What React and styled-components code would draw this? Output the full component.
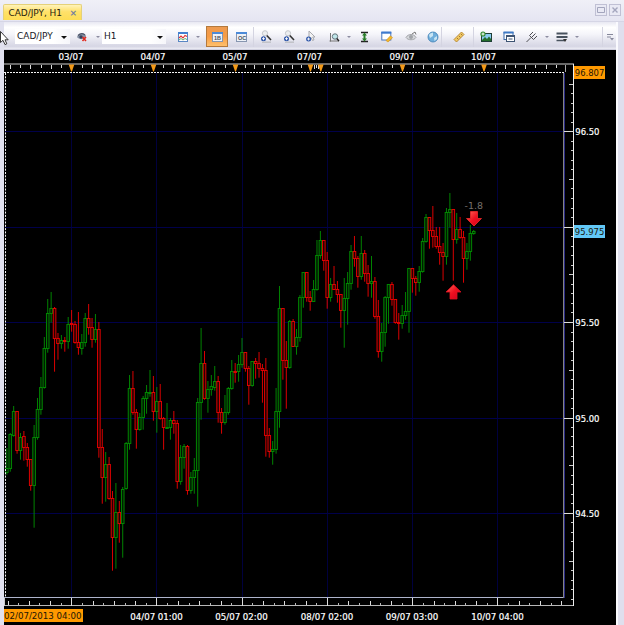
import styled, { createGlobalStyle } from "styled-components"

/* high, body top, body bottom, low, direction: one entry per hour */
const CANDLES = `448 468 472 474 u|433 434 468 471 u|406 411 435 436 u|411 411 450 453 d|433 437 450 459 u
431 436 447 460 d|443 447 459 466 d|459 459 485 490 d|425 437 485 527 u|398 409 437 439 u
377 387 409 414 u|337 348 387 388 u|299 313 348 352 u|292 308 313 322 u|307 308 338 371 d
333 338 343 359 d|335 340 343 348 u|337 340 341 351 d|317 324 341 348 u|310 323 324 331 d
321 324 342 343 d|312 342 347 354 d|334 342 348 354 u|313 318 342 346 u|304 318 327 334 d
318 327 339 347 d|314 329 339 342 u|322 329 447 457 d|429 447 477 503 d|452 464 477 501 u
457 464 498 499 d|491 498 537 570 d|483 512 537 568 u|501 512 523 542 d|487 489 523 557 u
442 443 488 489 u|375 388 443 449 u|371 388 412 414 d|409 412 429 448 d|413 417 429 430 u
396 398 417 429 u|385 392 398 413 u|370 392 393 396 u|376 392 411 420 d|387 401 411 432 u
384 401 418 419 d|417 418 427 449 d|403 427 428 428 u|418 420 427 439 u|411 420 423 433 d
420 423 481 488 d|445 457 481 484 u|444 446 457 468 u|445 446 490 494 d|472 477 490 493 u
458 470 477 493 u|398 402 470 506 u|328 363 402 419 u|351 363 398 399 d|381 389 398 412 u
375 386 389 395 u|366 381 387 390 u|376 381 412 422 d|408 412 422 433 d|395 412 422 424 u
387 388 412 414 u|360 371 388 389 u|363 371 372 382 d|355 364 371 381 u|338 352 364 367 u
352 352 368 371 d|366 368 385 404 d|361 361 385 386 u|358 361 363 378 d|352 363 368 377 d
364 368 370 402 d|358 370 435 456 d|428 435 451 457 d|441 449 451 464 u|388 411 449 453 u
286 308 411 427 u|308 308 360 379 d|341 360 367 408 d|320 321 367 368 u|319 321 346 346 d
329 337 346 354 u|295 297 337 341 u|272 272 297 307 u|272 272 297 301 d|291 297 301 310 d
280 289 301 301 u|240 255 289 290 u|231 240 255 258 u|240 240 260 270 d|252 260 297 308 d
278 284 297 301 u|266 284 289 289 d|281 289 294 302 d|294 294 310 327 d|278 298 310 347 u
272 283 298 324 u|245 251 283 289 u|236 251 258 266 d|256 258 276 287 d|236 253 276 279 u
250 253 273 281 d|265 273 283 296 d|256 281 283 297 u|277 281 316 318 d|300 316 351 357 d
323 332 351 361 u|296 297 332 346 u|284 284 297 323 u|282 284 299 305 d|299 299 322 323 d
313 322 323 339 d|305 315 323 328 u|292 311 315 319 u|268 268 311 332 u|268 268 278 292 d
276 278 282 295 d|266 271 282 291 u|238 241 271 272 u|214 217 241 242 u|217 217 230 248 d
206 230 236 247 d|227 236 246 248 d|227 246 252 264 d|243 252 256 280 d|208 212 256 264 u
193 209 212 227 u|209 209 239 280 d|213 229 239 243 u|217 229 237 238 d|231 237 258 282 d
243 251 258 269 u|225 233 251 260 u|230 231 233 234 u`
  .split(/[|\n]/)
  .map((row) => {
    const [high, top, bottom, low, dir] = row.trim().split(" ")
    return { high: +high, top: +top, bottom: +bottom, low: +low, up: dir === "u" }
  })

const CANDLE_START = 6.85
const CANDLE_STEP = 3.408

const GRID_X = [71, 156, 242, 327, 412, 497]
const GRID_Y = [131, 227, 322, 418, 513]

const TOP_LABELS = [
  [71, "03/07"],
  [153, "04/07"],
  [235, "05/07"],
  [309.5, "07/07"],
  [402, "09/07"],
  [483.5, "10/07"],
]
const MARKERS = [71.5, 153.5, 235.5, 310.5, 320.8, 402.5, 484]
const TOP_TICKS = [
  ...Array.from({ length: 23 }, (_, i) => 10 + i * 10.22),
  ...Array.from({ length: 7 }, (_, i) => 244.8 + i * 9.35),
  313.5,
  315.5,
  317.5,
  ...Array.from({ length: 23 }, (_, i) => 331 + i * 10.22),
]
const BOTTOM_LABELS = [
  [156.5, "04/07 01:00"],
  [241.5, "05/07 02:00"],
  [327, "08/07 02:00"],
  [412, "09/07 03:00"],
  [497.5, "10/07 04:00"],
]
const PRICE_LABELS = [
  [131, "96.50"],
  [322, "95.50"],
  [418, "95.00"],
  [513, "94.50"],
]
const BOTTOM_TICKS = Array.from({ length: 53 }, (_, i) => ({ x: 7.5 + i * 10.65, i }))
const PRICE_TICKS = Array.from({ length: 55 }, (_, i) => ({ y: 83.8 + i * 9.54, i }))

const App = () => (
  <>
    <GlobalStyle />
    <Window>
      <TitleBar>
        <Tab>
          CAD/JPY, H1 <TabClose>×</TabClose>
        </Tab>
        <WindowButtons>
          <WindowButton>
            <svg width="8" height="8">
              <path d="M0.5 1.5H7.5V6.5H0.5Z" fill="none" stroke="#a3a5bd" />
            </svg>
          </WindowButton>
          <WindowButton>
            <svg width="8" height="8">
              <path d="M1.5 1.5L6.5 6.5M6.5 1.5L1.5 6.5" stroke="#a3a5bd" strokeWidth="1.4" />
            </svg>
          </WindowButton>
        </WindowButtons>
      </TitleBar>
      <Toolbar />
      <Chart />
    </Window>
    <Pointer width="9" height="15" viewBox="0 0 9 15">
      <path
        d="M0.5 0.5V11.5L3 9.3L5 13.6L6.8 12.8L5 8.8H8.2Z"
        fill="#fff"
        stroke="#222"
        strokeWidth="0.9"
      />
    </Pointer>
  </>
)

export default App

const Toolbar = () => (
  <Bar>
    <Grip />
    <Combo $width={55}>
      CAD/JPY <Caret />
    </Combo>
    <Tool $width={24}>
      <EyeIcon />
    </Tool>
    <Drop $width={8} />
    <Combo $width={64}>
      H1 <Caret />
    </Combo>
    <Tool $width={24} $gap={5}>
      <ChartIcon />
    </Tool>
    <Drop $width={6} />
    <Tool $width={22} $gap={5} $active>
      <PanelIcon label="1B" />
    </Tool>
    <Tool $width={24} $gap={1}>
      <PanelIcon label="OC" />
    </Tool>
    <Divider />
    <Tool $width={24}>
      <LensIcon />
    </Tool>
    <Tool $width={22}>
      <LensIcon />
    </Tool>
    <Tool $width={22}>
      <CursorPlusIcon />
    </Tool>
    <Tool $width={23}>
      <ZoomRangeIcon />
    </Tool>
    <Drop $width={8} />
    <Tool $width={24}>
      <HeightIcon />
    </Tool>
    <Tool $width={20}>
      <NoteIcon />
    </Tool>
    <Tool $width={27}>
      <GreyGlobeIcon />
    </Tool>
    <Tool $width={17}>
      <GlobeIcon />
    </Tool>
    <Divider />
    <Tool $width={24} $gap={5}>
      <RulerIcon />
    </Tool>
    <Divider $gap={2} />
    <Tool $width={24}>
      <PictureIcon />
    </Tool>
    <Tool $width={21}>
      <WindowsIcon />
    </Tool>
    <Tool $width={25}>
      <ForkIcon />
    </Tool>
    <Drop $width={5} />
    <Tool $width={25}>
      <LinesIcon />
    </Tool>
    <Drop $width={5} />
    <Spacer />
    <Divider />
    <Tool $width={13}>
      <OverflowIcon />
    </Tool>
  </Bar>
)

const Chart = () => (
  <ChartSvg width="612" height="575" viewBox="4 50 612 575">
    <rect x="4" y="50" width="612" height="575" fill="#000" />
    <g shapeRendering="crispEdges">
      {GRID_X.map((x) => (
        <rect key={x} x={x} y="73" width="1" height="524" fill="#00003e" />
      ))}
      {GRID_Y.map((y) => (
        <rect key={y} x="5" y={y} width="559" height="1" fill="#00004a" />
      ))}
    </g>
    {CANDLES.map((candle, i) => (
      <Candle key={i} x={CANDLE_START + i * CANDLE_STEP} {...candle} />
    ))}
    <TopScale />
    <BottomScale />
    <PriceScale />
    <Signals />
  </ChartSvg>
)

const Candle = ({ x, high, top, bottom, low, up }) => {
  const color = up ? "#008a00" : "#e60000"
  return (
    <g stroke={color} fill={up ? "#001c00" : "#260000"} strokeWidth="0.95">
      <path d={`M${x} ${high}V${low + 0.7}`} />
      <rect x={x - 1.3} y={top + 0.5} width="2.6" height={Math.max(bottom - top, 0.8)} />
    </g>
  )
}

const TopScale = () => (
  <g>
    <g shapeRendering="crispEdges">
      <rect x="4" y="63" width="570" height="2" fill="#686868" />
      {TOP_TICKS.map((x, i) => (
        <rect key={x} x={x} y="65" width="1" height={i % 2 ? 3 : 4} fill="#ddd" />
      ))}
      <rect x="565" y="65" width="1" height="7" fill="#aaa" />
    </g>
    <path d="M4 72.5H564" stroke="#f4f4f4" strokeDasharray="2 1" />
    <path d="M5.5 73V597" stroke="#f4f4f4" strokeDasharray="2 1.3" />
    {MARKERS.map((x) => (
      <path key={x} d={`M${x - 2.8} 64.5H${x + 2.8}L${x + 0.4} 71.5H${x - 0.4}Z`} fill="#f49a18" />
    ))}
    {TOP_LABELS.map(([x, label]) => (
      <ScaleText key={label} x={x} y="60" textAnchor="middle" textLength="25">
        {label}
      </ScaleText>
    ))}
  </g>
)

const BottomScale = () => (
  <g>
    <g shapeRendering="crispEdges">
      <rect x="4" y="597" width="560" height="1" fill="#aeb4cc" />
      <rect x="4" y="605" width="570" height="1" fill="#b8b8b8" />
      <rect x="4" y="598" width="1" height="8" fill="#ccc" />
      {BOTTOM_TICKS.map(({ x, i }) =>
        /* every eighth tick is drawn full height with the grid */
        i % 8 === 6 ? null : (
          <rect
            key={i}
            x={x}
            y={i % 2 ? 603 : 601}
            width="1"
            height={i % 2 ? 2 : 4}
            fill={i % 2 ? "#bbb" : "#ddd"}
          />
        )
      )}
      {GRID_X.map((x) => (
        <rect key={x} x={x} y="598" width="1" height="8" fill="#ddd" />
      ))}
    </g>
    {BOTTOM_LABELS.map(([x, label]) => (
      <ScaleText key={label} x={x} y="620" textAnchor="middle" textLength="52.5">
        {label}
      </ScaleText>
    ))}
    <rect x="4" y="609" width="79" height="13" fill="#ff9900" />
    <ScaleText x="4" y="619.2" textLength="77.5" $dark>
      02/07/2013 04:00
    </ScaleText>
  </g>
)

const PriceScale = () => (
  <g>
    <g shapeRendering="crispEdges">
      <rect x="563" y="73" width="1" height="525" fill="#858585" />
      <rect x="564" y="73" width="1" height="525" fill="#292985" />
      <rect x="573" y="64" width="1" height="542" fill="#eee" />
      {PRICE_TICKS.map(({ y, i }) =>
        i % 10 === 5 ? null : (
          <rect
            key={i}
            x={i % 5 ? 571 : 569}
            y={y - 0.3}
            width={i % 5 ? 2 : 4}
            height="1"
            fill="#ccc"
          />
        )
      )}
      {GRID_Y.map((y) => (
        <rect key={y} x="564" y={y} width="10" height="1" fill="#ddd" />
      ))}
    </g>
    {PRICE_LABELS.map(([y, label]) => (
      <ScaleText key={label} x="575.3" y={y + 4.2} textLength="24.2">
        {label}
      </ScaleText>
    ))}
    <rect x="574" y="66" width="31" height="13" fill="#ff9900" />
    <ScaleText x="574.8" y="76.2" textLength="29.5" $dark>
      96.807
    </ScaleText>
    <rect x="574" y="225" width="31" height="13" fill="#62c8f7" />
    <ScaleText x="574.8" y="235.2" textLength="29.5" $dark>
      95.975
    </ScaleText>
  </g>
)

const Signals = () => (
  <g>
    <defs>
      <linearGradient id="signal" x1="0" x2="1" y1="0" y2="1">
        <stop offset="0" stopColor="#ff6b5a" />
        <stop offset="0.5" stopColor="#ee1020" />
        <stop offset="1" stopColor="#c8001c" />
      </linearGradient>
    </defs>
    <ScaleText x="464.5" y="209" textLength="18.5" $muted>
      -1.8
    </ScaleText>
    <path
      d="M470.5 211.5H477.5V218.5H481.5L474 226L466.5 218.5H470.5Z"
      fill="url(#signal)"
      stroke="#f02a2a"
      strokeWidth="0.8"
    />
    <path
      d="M450 299V292H446L453.5 284.7L461 292H457V299Z"
      fill="url(#signal)"
      stroke="#e01020"
      strokeWidth="0.8"
    />
  </g>
)

/* Toolbar icons */
const EyeIcon = () => (
  <Icon>
    <path d="M2 7C3 3 10 2 11 6C10 10 4 10 2 7Z" fill="#8792a5" />
    <path d="M3 5.5C5 3.5 8 3.5 10 5" fill="none" stroke="#4c5468" strokeWidth="1.2" />
    <circle cx="6" cy="7" r="1.7" fill="#33415c" />
    <path d="M7.5 7L11 11M11 7L7.5 11" stroke="#e0281e" strokeWidth="1.5" />
  </Icon>
)

const ChartIcon = () => (
  <Icon>
    <rect x="2.5" y="2.5" width="9" height="9" fill="#fff" stroke="#5a86c4" />
    <rect x="2" y="2" width="10" height="2" fill="#4380d0" />
    <path d="M3 8L5 6L7 8L9 5.5L11 6.5" fill="none" stroke="#d33" strokeWidth="1.1" />
    <path d="M3 10L5 8.5L7 10L9 8.5L11 9.5" fill="none" stroke="#3a9a4a" strokeWidth="0.8" />
  </Icon>
)

const PanelIcon = ({ label }) => (
  <Icon>
    <rect x="2.5" y="2.5" width="10" height="9" fill="#eef2f8" stroke="#8796b0" />
    <rect x="2" y="2" width="11" height="2" fill="#4c8ad8" />
    <PanelText x="4" y="10.2">
      {label}
    </PanelText>
  </Icon>
)

const LensIcon = () => (
  <Icon>
    <circle cx="6" cy="3.3" r="2.6" fill="#eceef0" stroke="#c3c6cb" />
    <path d="M7.8 5.5L12 10" stroke="#333" strokeWidth="1.6" />
    <circle cx="4.5" cy="8.7" r="2.5" fill="#2b54a8" />
    <path d="M3 8.7H6M4.5 7.2V10.2" stroke="#fff" strokeWidth="0.9" />
    <path d="M3 12.2H12" stroke="#c0c1c8" strokeWidth="1.5" />
  </Icon>
)

const CursorPlusIcon = () => (
  <Icon>
    <path d="M5 1V9L7 7.5L8.5 10.5L10 9.8L8.7 7H11Z" fill="#f2f2f3" stroke="#a8a9ae" />
    <circle cx="4.6" cy="9" r="2.5" fill="#2b54a8" />
    <path d="M3.1 9H6.1M4.6 7.5V10.5" stroke="#fff" strokeWidth="0.9" />
  </Icon>
)

const ZoomRangeIcon = () => (
  <Icon>
    <path d="M3.5 3V11.5M2.5 11H12" stroke="#777" />
    <circle cx="8" cy="6.5" r="2.7" fill="#bfe6ea" stroke="#66757c" />
    <path d="M9.8 8.5L12 11" stroke="#222" strokeWidth="1.4" />
  </Icon>
)

const HeightIcon = () => (
  <Icon>
    <path d="M3 2.5H10M3 11.5H10" stroke="#222" strokeWidth="1.4" />
    <path d="M6.5 2.5L9 5.5H7.5V8.5H9L6.5 11.5L4 8.5H5.5V5.5H4Z" fill="#287c28" />
  </Icon>
)

const NoteIcon = () => (
  <Icon>
    <rect x="1.8" y="2.5" width="9" height="7.5" fill="#fff" stroke="#4876bd" />
    <rect x="1.3" y="1.5" width="10" height="2.2" fill="#3d79ce" />
    <path d="M6 10.5L10.5 5.8L12.5 7.8L8 12Z" fill="#f5b92c" stroke="#cf8b16" strokeWidth="0.6" />
  </Icon>
)

const GreyGlobeIcon = () => (
  <Icon>
    <path d="M2 7.5C4 3.5 10 3.5 12 7.5C10 10.5 4 10.5 2 7.5Z" fill="#d6d8dc" stroke="#a4a6aa" />
    <circle cx="7" cy="7" r="2" fill="#a0a3a8" />
    <path d="M8 4L11 2L12 4.5" fill="none" stroke="#777" />
  </Icon>
)

const GlobeIcon = () => (
  <Icon>
    <circle cx="7" cy="7" r="5" fill="#6faedb" stroke="#3c7fb5" strokeWidth="0.8" />
    <path d="M3 5C4 3 6 3 7 2.5V6L4 8ZM8 8L11 6V9L8.5 11Z" fill="#c9e5f4" />
  </Icon>
)

const RulerIcon = () => (
  <Icon>
    <path d="M2 9.5L9.5 2L12 4.5L4.5 12Z" fill="#f1c861" stroke="#b3832f" strokeWidth="0.9" />
    <path d="M5 8L6.3 9.3M7 6L8.3 7.3M9 4L10.3 5.3" stroke="#8c6420" strokeWidth="0.8" />
  </Icon>
)

const PictureIcon = () => (
  <Icon>
    <rect x="2.5" y="3.5" width="10" height="8" fill="#8acbef" stroke="#1e3e36" />
    <path d="M3 10L6 7L8 9L10 6.5L12 9V11H3Z" fill="#246d2b" />
    <circle cx="4" cy="4" r="2.6" fill="#318b30" />
    <path d="M2.5 4H5.5M4 2.5V5.5" stroke="#fff" />
  </Icon>
)

const WindowsIcon = () => (
  <Icon>
    <rect x="2" y="2.5" width="9" height="7" fill="#fff" stroke="#3b6dad" />
    <rect x="1.5" y="1.5" width="10" height="2" fill="#3d79c6" />
    <rect x="4.5" y="5.5" width="8" height="6" fill="#fff" stroke="#3d5372" />
    <path d="M4.5 6.5H12.5M6.5 9H10.5" stroke="#3d5372" strokeWidth="1.2" />
  </Icon>
)

const ForkIcon = () => (
  <Icon>
    <path
      d="M1.5 12L6 7.5M4.5 5.5L8.5 9.5M4.5 5.5L8 2M6.5 7.5L10.5 3.5M8.5 9.5L12 6"
      fill="none"
      stroke="#4d4d52"
      strokeWidth="1"
    />
  </Icon>
)

const LinesIcon = () => (
  <Icon>
    <path d="M1.5 3.5H12.5" stroke="#48525e" strokeWidth="2" />
    <path d="M1.5 7H12.5" stroke="#48525e" strokeWidth="2" />
    <path d="M1.5 10.5H9.5" stroke="#48525e" strokeWidth="1.5" />
    <path d="M8 9H12L10 12Z" fill="#333" />
  </Icon>
)

const OverflowIcon = () => (
  <Icon>
    <path d="M4 4.5H10M4 7H8" stroke="#85879a" />
    <path d="M7 8H11L9 10.5Z" fill="#85879a" />
  </Icon>
)

const GlobalStyle = createGlobalStyle`
  body {
    margin: 0;
    overflow: hidden;
    background: #e5e5f1;
    font-family: "DejaVu Sans", sans-serif;
  }
`

const Window = styled.div`
  box-sizing: border-box;
  width: 624px;
  height: 625px;
  padding-left: 4px;
  background: linear-gradient(90deg, #e1e1ef 616px, #fafafe 616px 618px, #dfdfed 618px);
`

const TitleBar = styled.header`
  display: flex;
  align-items: flex-end;
  justify-content: space-between;
  box-sizing: border-box;
  height: 22px;
  margin-left: -4px;
  padding: 0 3px 1px;
  border-bottom: 1px solid #d5d5e5;
  background: linear-gradient(#f0f0f7, #e5e5f2);
`

const Tab = styled.div`
  display: flex;
  align-items: center;
  justify-content: space-between;
  box-sizing: border-box;
  width: 79px;
  height: 16px;
  padding: 0 4px 0 4.5px;
  border: 1px solid #e5d179;
  border-bottom: 0;
  border-radius: 2px 2px 0 0;
  background: linear-gradient(#fff3ba, #ffe16a 45%, #fddd55);
  color: #29220d;
  font-size: 9px;
  letter-spacing: -0.05px;
  white-space: nowrap;
`

const TabClose = styled.span`
  color: #7580a0;
  font-size: 9px;
  font-weight: bold;
`

const WindowButtons = styled.div`
  display: flex;
  gap: 2px;
  align-self: flex-start;
  padding-top: 4px;
`

const WindowButton = styled.button`
  display: flex;
  align-items: center;
  justify-content: center;
  box-sizing: border-box;
  width: 12px;
  height: 12px;
  padding: 0;
  border: 1px solid #c0c0d4;
  background: #e9e9f4;
`

const Bar = styled.div`
  display: flex;
  align-items: center;
  box-sizing: border-box;
  width: 612px;
  height: 28px;
  padding-top: 2px;
  border-bottom: 1px solid #d0d0df;
  background: linear-gradient(#e8e8f2, #fff 20%, #f5f5fa 45%, #d6d6e4 90%, #ececf4);
`

const Grip = styled.div`
  flex: none;
  width: 11px;
`

const Combo = styled.div`
  display: flex;
  flex: none;
  align-items: center;
  justify-content: space-between;
  box-sizing: border-box;
  width: ${({ $width }) => $width}px;
  height: 15px;
  padding: 0 3px 1px 2px;
  background: linear-gradient(90deg, #fff calc(100% - 17px), #f6f6fa);
  color: #17171f;
  font-size: 9px;
`

const Caret = styled.i`
  margin-top: 3px;
  border: 3px solid transparent;
  border-top-color: #111;
  border-bottom: 0;
`

const Tool = styled.button`
  display: flex;
  flex: none;
  align-items: center;
  justify-content: center;
  box-sizing: border-box;
  width: ${({ $width }) => $width}px;
  height: 21px;
  margin-left: ${({ $gap }) => $gap || 0}px;
  padding: 0;
  border: ${({ $active }) => ($active ? "1px solid #b4793c" : "0")};
  background: ${({ $active }) =>
    $active ? "linear-gradient(#ec9a50, #f79c45 50%, #ffc06c)" : "transparent"};
`

const Drop = styled.i`
  flex: none;
  width: ${({ $width }) => $width}px;
  height: 2px;

  &::after {
    content: "";
    display: block;
    width: 0;
    margin: 0 auto;
    border: 2px solid transparent;
    border-top-color: #8c8ca0;
    border-bottom: 0;
  }
`

const Divider = styled.i`
  flex: none;
  width: 1px;
  height: 20px;
  margin-left: ${({ $gap }) => $gap || 0}px;
  background: #d4d4e1;
`

const Spacer = styled.div`
  flex: 1;
`

const Icon = styled.svg.attrs({ viewBox: "0 0 14 14" })`
  flex: none;
  width: 14px;
  height: 14px;
`

const PanelText = styled.text`
  fill: #47505f;
  font: bold 5.5px "Liberation Sans", sans-serif;
`

const ChartSvg = styled.svg`
  display: block;
`

const ScaleText = styled.text.attrs({ lengthAdjust: "spacingAndGlyphs" })`
  fill: ${({ $dark, $muted }) => ($dark ? "#1c1606" : $muted ? "#77706c" : "#fff")};
  stroke: ${({ $dark, $muted }) => ($dark || $muted ? "none" : "#fff")};
  stroke-width: 0.2px;
  font-family: "DejaVu Sans", sans-serif;
  font-size: 9px;
`

const Pointer = styled.svg`
  position: absolute;
  top: 31px;
  left: 0;
`
